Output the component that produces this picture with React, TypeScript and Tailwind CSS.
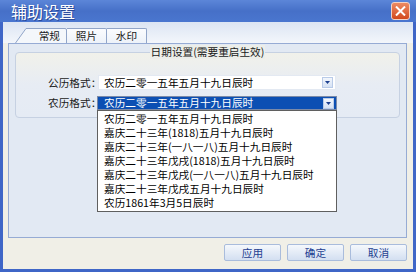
import React from "react";

const FONT = { fontFamily: '"Noto Sans CJK SC", "Noto Sans", sans-serif' };

const LUNAR_OPTIONS = [
  "农历二零一五年五月十九日辰时",
  "嘉庆二十三年(1818)五月十九日辰时",
  "嘉庆二十三年(一八一八)五月十九日辰时",
  "嘉庆二十三年戊戌(1818)五月十九日辰时",
  "嘉庆二十三年戊戌(一八一八)五月十九日辰时",
  "嘉庆二十三年戊戌五月十九日辰时",
  "农历1861年3月5日辰时",
];

function ArrowBox() {
  return (
    <div className="w-[11px] h-[11px] mr-[2px] flex items-center justify-center bg-gradient-to-b from-[#f2f6fc] to-[#d6e2f4] border border-[#b9cbe8]">
      <svg width="5" height="3" viewBox="0 0 5 3">
        <path d="M0 0h5L2.5 3z" fill="#1c3f8f" />
      </svg>
    </div>
  );
}

function Tab({ label, first }: { label: string; first?: boolean }) {
  if (first) {
    return (
      <div className="relative h-[15px] w-[52px] flex items-center justify-end pr-[7px]">
        <svg className="absolute left-0 top-0" width="52" height="15" viewBox="0 0 52 15">
          <path d="M0.5 15 L11 0.5 H50 Q51.5 0.5 51.5 2 V15" fill="#f4f7fb" stroke="#91a5c8" />
        </svg>
        <span className="relative text-[#1a1a1a]">{label}</span>
      </div>
    );
  }
  return (
    <div className="h-[15px] w-[40px] flex items-center justify-center border-t border-r border-[#91a5c8] rounded-tr-[2px] bg-gradient-to-b from-[#fbfcfe] to-[#edf2f9] text-[#1a1a1a]">
      {label}
    </div>
  );
}

function Button({ label }: { label: string }) {
  return (
    <div className="w-[57px] h-[17px] flex items-center justify-center rounded-[2px] border border-[#a9bcdc] bg-gradient-to-b from-[#f5f8fc] to-[#d3dff1] text-[#1d3f91]">
      {label}
    </div>
  );
}

export default function App() {
  return (
    <div className="w-[416px] h-[272px] flex flex-col text-[10.67px] leading-[14px] overflow-hidden" style={FONT}>
      {/* Title bar */}
      <div className="h-[22px] flex items-center justify-between pl-[11px] pr-[6px] bg-gradient-to-b from-[#5c86d8] via-[#4670c8] to-[#4a76cf]">
        <span className="text-white text-[16px] leading-[20px] [text-shadow:1px_1px_0_#2a4a9a]">辅助设置</span>
        <div className="w-[19px] h-[18px] rounded-[3px] border border-[#f3d2c4] bg-gradient-to-b from-[#ec8a62] to-[#d2481a] flex items-center justify-center">
          <svg width="11" height="10" viewBox="0 0 11 10">
            <path d="M1 0.5 L10 9.5 M10 0.5 L1 9.5" stroke="#fff" strokeWidth="2" />
          </svg>
        </div>
      </div>

      {/* Body */}
      <div className="flex-1 flex flex-col border-x-[3px] border-b-[3px] border-[#3f66c7] bg-[#f0efe7]">
        {/* Tab strip */}
        <div className="h-[21px] flex items-end pl-[12px] bg-gradient-to-b from-[#dce5f3] to-[#f3f6fb]">
          <Tab label="常规" first />
          <Tab label="照片" />
          <Tab label="水印" />
        </div>

        {/* Tab panel */}
        <div className="h-[195px] ml-[5px] mr-[6px] border border-[#96abd4] bg-[#e2e9f3] relative">
          {/* Group box */}
          <div className="relative mt-[8px] ml-[6px] w-[385px] h-[66px] rounded-[4px] border border-[#c6d1e2] bg-gradient-to-b from-[#f1f1ea] via-[#e7ecf4] to-[#e5ebf4]">
            <div className="absolute left-0 right-0 -top-[8px] flex justify-center">
              <span className="px-[1px] bg-[#eceee9] text-[#1a1a1a]">日期设置(需要重启生效)</span>
            </div>

            <div className="mt-[22px] flex items-center">
              <span className="ml-[32px] w-[50px] whitespace-nowrap text-[#1a1a1a]">公历格式：</span>
              <div className="w-[238px] h-[15px] flex items-center justify-between bg-white border border-[#e3e9f2]">
                <span className="pl-[5px] text-black">农历二零一五年五月十九日辰时</span>
                <ArrowBox />
              </div>
            </div>

            <div className="mt-[6px] flex items-center">
              <span className="ml-[32px] w-[49px] whitespace-nowrap text-[#1a1a1a]">农历格式：</span>
              <div className="relative z-10">
                <div className="w-[240px] h-[14px] flex items-center justify-between bg-[#0c4fb3] border border-[#7b8aa8]">
                  <span className="pl-[6px] text-white">农历二零一五年五月十九日辰时</span>
                  <ArrowBox />
                </div>
                {/* Drop-down list */}
                <div className="absolute left-0 top-[14px] w-[240px] h-[102px] pt-[1px] bg-white border border-[#5f5f5f]">
                  {LUNAR_OPTIONS.map((o) => (
                    <div key={o} className="h-[14px] pl-[6px] leading-[14px] text-black whitespace-nowrap">
                      {o}
                    </div>
                  ))}
                </div>
              </div>
            </div>
          </div>
        </div>

        {/* Buttons */}
        <div className="flex justify-end gap-[6px] pt-[6px] pr-[6px]">
          <Button label="应用" />
          <Button label="确定" />
          <Button label="取消" />
        </div>
      </div>
    </div>
  );
}
